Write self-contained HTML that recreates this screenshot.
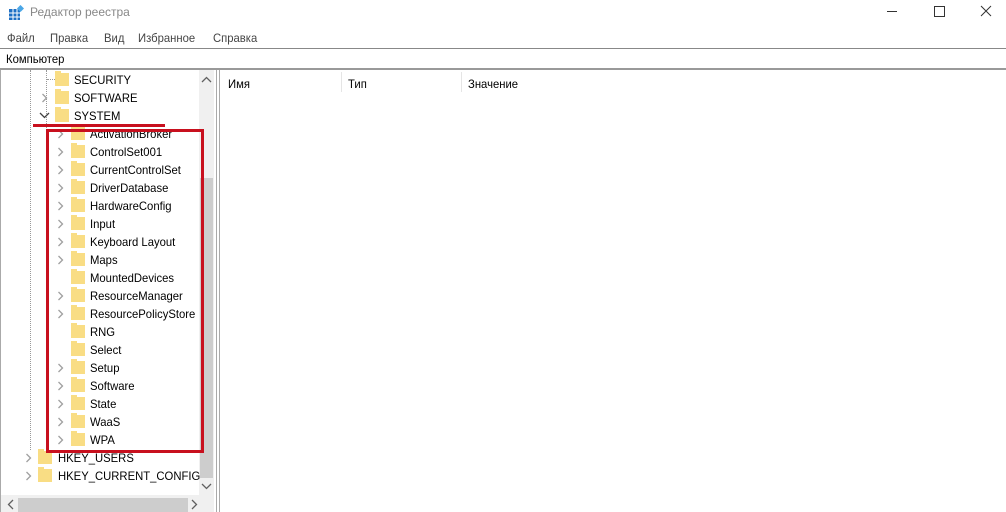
<!DOCTYPE html><html><head><style>
body{margin:0;width:1006px;height:512px;background:#fff;font-family:"Liberation Sans",sans-serif;font-size:12px;color:#000;position:relative;overflow:hidden}
.a{position:absolute;white-space:nowrap}
.t{transform:scaleX(0.94);transform-origin:0 0}
.f{position:absolute;width:14px;height:13px;background:#f9dd84;border-top:2px solid #fff}
.f:before{content:"";position:absolute;left:0;top:-2px;width:6px;height:2px;background:#f9dd84}
.ar{position:absolute}
</style></head><body>
<svg class="a" style="left:8px;top:5px" width="16" height="16"><rect x="1" y="4" width="11" height="11" fill="#1e6fc4"/><path d="M1 8h11M1 12h11M5 4v11M9 4v11" stroke="#fff"/><rect x="10" y="1" width="5" height="5" fill="#4aa6e6" transform="rotate(45 12.5 3.5)"/></svg>
<div class="a" style="left:30px;top:5px;font-size:12px;color:#888">Редактор реестра</div>
<div class="a" style="left:887px;top:11px;width:10px;height:1px;background:#333"></div>
<div class="a" style="left:934px;top:6px;width:9px;height:9px;border:1px solid #333"></div>
<svg class="a" style="left:980px;top:5px" width="12" height="12"><path d="M1 1L11 11M11 1L1 11" stroke="#333"/></svg>
<div class="a t" style="left:7px;top:31px;color:#444">Файл</div>
<div class="a t" style="left:50px;top:31px;color:#444">Правка</div>
<div class="a t" style="left:104px;top:31px;color:#444">Вид</div>
<div class="a t" style="left:138px;top:31px;color:#444">Избранное</div>
<div class="a t" style="left:213px;top:31px;color:#444">Справка</div>
<div class="a" style="left:0;top:48px;width:1006px;height:1px;background:#888"></div>
<div class="a t" style="left:6px;top:52px">Компьютер</div>
<div class="a" style="left:0;top:68px;width:1006px;height:2px;background:#999"></div>
<div class="a" style="left:0;top:70px;width:1px;height:442px;background:#aaa"></div>
<div class="a" style="left:199px;top:70px;width:15px;height:425px;background:#f0f0f0"></div>
<div class="a" style="left:200px;top:178px;width:13px;height:300px;background:#cdcdcd"></div>
<svg class="a" style="left:201px;top:76px" width="11" height="8"><path d="M1 6L5.5 1.5L10 6" stroke="#606060" fill="none" stroke-width="1.3"/></svg>
<svg class="a" style="left:201px;top:482px" width="11" height="8"><path d="M1 2L5.5 6.5L10 2" stroke="#606060" fill="none" stroke-width="1.3"/></svg>
<div class="a" style="left:1px;top:495px;width:213px;height:17px;background:#f0f0f0"></div>
<div class="a" style="left:18px;top:498px;width:170px;height:14px;background:#cdcdcd"></div>
<svg class="a" style="left:7px;top:499px" width="8" height="11"><path d="M6 1L1.5 5.5L6 10" stroke="#606060" fill="none" stroke-width="1.3"/></svg>
<svg class="a" style="left:190px;top:499px" width="8" height="11"><path d="M2 1L6.5 5.5L2 10" stroke="#606060" fill="none" stroke-width="1.3"/></svg>
<div class="a" style="left:216px;top:70px;width:1px;height:442px;background:#aaa"></div>
<div class="a" style="left:219px;top:70px;width:1px;height:442px;background:#aaa"></div>
<div class="a t" style="left:228px;top:77px">Имя</div>
<div class="a" style="left:341px;top:72px;width:1px;height:20px;background:#e5e5e5"></div>
<div class="a t" style="left:348px;top:77px">Тип</div>
<div class="a" style="left:461px;top:72px;width:1px;height:20px;background:#e5e5e5"></div>
<div class="a t" style="left:468px;top:77px">Значение</div>
<div class="a" style="left:46px;top:70px;height:60px;border-left:1px dotted #999"></div>
<div class="a" style="left:30px;top:70px;height:380px;border-left:1px dotted #999"></div>
<div class="a" style="left:47px;top:79px;width:8px;border-top:1px dotted #999"></div>
<div id="t"></div>
<script>
var h='';function row(y,ax,fx,tx,t,arrow,down){if(arrow){h+= down?'<svg class="ar" style="left:'+(ax-1)+'px;top:'+(y-3)+'px" width="11" height="7"><path d="M1 1L5.5 5.5L10 1" stroke="#404040" fill="none" stroke-width="1.3"/></svg>':'<svg class="ar" style="left:'+ax+'px;top:'+(y-4)+'px" width="7" height="11"><path d="M1.5 1L5.5 5L1.5 9" stroke="#a0a0a0" fill="none" stroke-width="1.3"/></svg>';}
h+='<div class="f" style="left:'+fx+'px;top:'+(y-8)+'px"></div><div class="a t" style="left:'+tx+'px;top:'+(y-6)+'px">'+t+'</div>';}
row(79,0,55,74,'SECURITY',0);row(97,41,55,74,'SOFTWARE',1);row(115,40,55,74,'SYSTEM',1,1);
var c=[['ActivationBroker',1],['ControlSet001',1],['CurrentControlSet',1],['DriverDatabase',1],['HardwareConfig',1],['Input',1],['Keyboard Layout',1],['Maps',1],['MountedDevices',0],['ResourceManager',1],['ResourcePolicyStore',1],['RNG',0],['Select',0],['Setup',1],['Software',1],['State',1],['WaaS',1],['WPA',1]];
c.forEach(function(e,i){row(133+18*i,57,71,90,e[0],e[1]);});
row(457,25,38,58,'HKEY_USERS',1);row(475,25,38,58,'HKEY_CURRENT_CONFIG',1);
document.getElementById('t').innerHTML=h;
</script>
<div class="a" style="left:33px;top:124px;width:132px;height:3px;background:#c8101e"></div>
<div class="a" style="left:46px;top:129px;width:152px;height:318px;border:3px solid #c8101e"></div>
</body></html>
